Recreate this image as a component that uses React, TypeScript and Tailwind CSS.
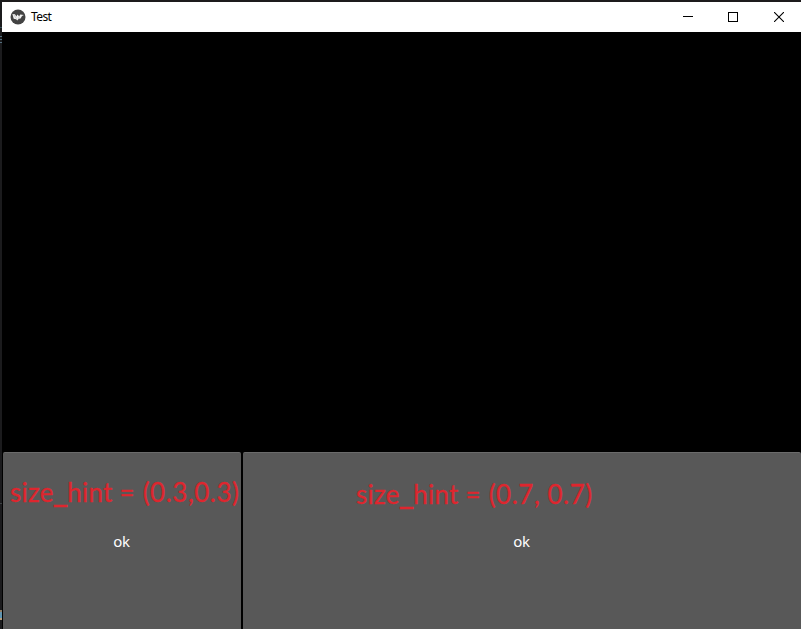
function KivyLogo() {
  return (
    <svg width="16" height="16" viewBox="0 0 16 16" aria-hidden="true">
      <circle cx="8" cy="8" r="7.5" fill="#434343" />
      <path d="M2.4 4.9 L5 5.3 L6.4 7.6 L7.3 5.6 L9.2 7.2 L10.3 5.5 L13.9 5.9 L12 7.1 L10.6 9.5 L8.8 9.7 L7.2 11.6 L6.2 10.3 L3.7 9.7 Z" fill="#f4f4f4" />
      <path d="M3.6 5.4 L6.5 9.8 M9.2 7.2 L8.6 9.7" stroke="#a5a5a5" strokeWidth=".5" />
    </svg>
  );
}

function TitleBar() {
  return (
    <header className="flex h-[30px] shrink-0 items-center bg-white text-black">
      <div className="mb-px ml-2 flex h-4 w-4">
        <KivyLogo />
      </div>
      <span className="ml-[5px] grow text-[12px] leading-[16px] tracking-[-0.6px]">Test</span>
      <div className="flex h-full">
        <div className="flex w-[46px] items-center justify-center">
          <svg width="10" height="10" shapeRendering="crispEdges"><path d="M0 4h10v1H0z" /></svg>
        </div>
        <div className="flex w-[44px] items-center justify-center">
          <svg width="10" height="10" shapeRendering="crispEdges"><path d="M.5 .5h9v9h-9z" fill="none" stroke="#000" /></svg>
        </div>
        <div className="flex w-[46px] items-center justify-center pb-px pl-[2px]">
          <svg width="10" height="10"><path d="M0 0 L10 10 M10 0 L0 10" stroke="#000" strokeWidth="1.1" /></svg>
        </div>
      </div>
    </header>
  );
}

function Note({ value, place }: { value: string; place: string }) {
  return (
    <span className={`absolute whitespace-pre font-['Lato',sans-serif] text-[26px] leading-[36px] tracking-[0.24px] text-[#de262e] [-webkit-text-stroke:0.3px_#de262e] ${place}`}>
      size
      <span className="font-['Noto_Sans',sans-serif] text-[31px] font-medium leading-[20px] tracking-normal">_</span>
      hint = <span className="ml-px tracking-[0.5px]">{value}</span>
    </span>
  );
}

export default function App() {
  return (
    <div className="flex h-[629px] w-[801px] overflow-hidden bg-black font-['Noto_Sans',sans-serif]">
      <div className="flex w-[2px] shrink-0 flex-col bg-[#1b1b1d]">
        <div className="mt-[27px] h-px bg-[#36505a]" />
        <div className="mt-[8px] h-px bg-[#547080]" />
        <div className="mt-[2px] h-px bg-[#547080]" />
        <div className="mt-[2px] h-px bg-[#547080]" />
        <div className="mt-[460px] h-px bg-[#3d4144]" />
        <div className="mt-[106px] h-[2px] bg-[#927d66]" />
        <div className="h-[6px] bg-[#5f94b0]" />
        <div className="h-[2px] bg-[#b99e7c]" />
      </div>
      <div className="flex min-w-0 grow flex-col border-t-2 border-[#1d1b1c]">
        <TitleBar />
        <main className="flex grow items-end gap-[2px] pl-px">
          <button className="relative flex h-[177px] w-[238px] items-center justify-center rounded-t-[2px] border-t border-[#6b6b6b] bg-[#585858] pr-px text-[15px] tracking-[-0.3px] text-white">
            ok
            <Note value="(0.3,0.3)" place="left-[7px] top-[21px]" />
          </button>
          <button className="relative flex h-[177px] grow items-center justify-center rounded-t-[2px] border-t border-[#6b6b6b] bg-[#585858] pr-px text-[15px] tracking-[-0.3px] text-white">
            ok
            <Note value="(0.7, 0.7)" place="left-[113px] top-[23px]" />
          </button>
        </main>
      </div>
    </div>
  );
}
